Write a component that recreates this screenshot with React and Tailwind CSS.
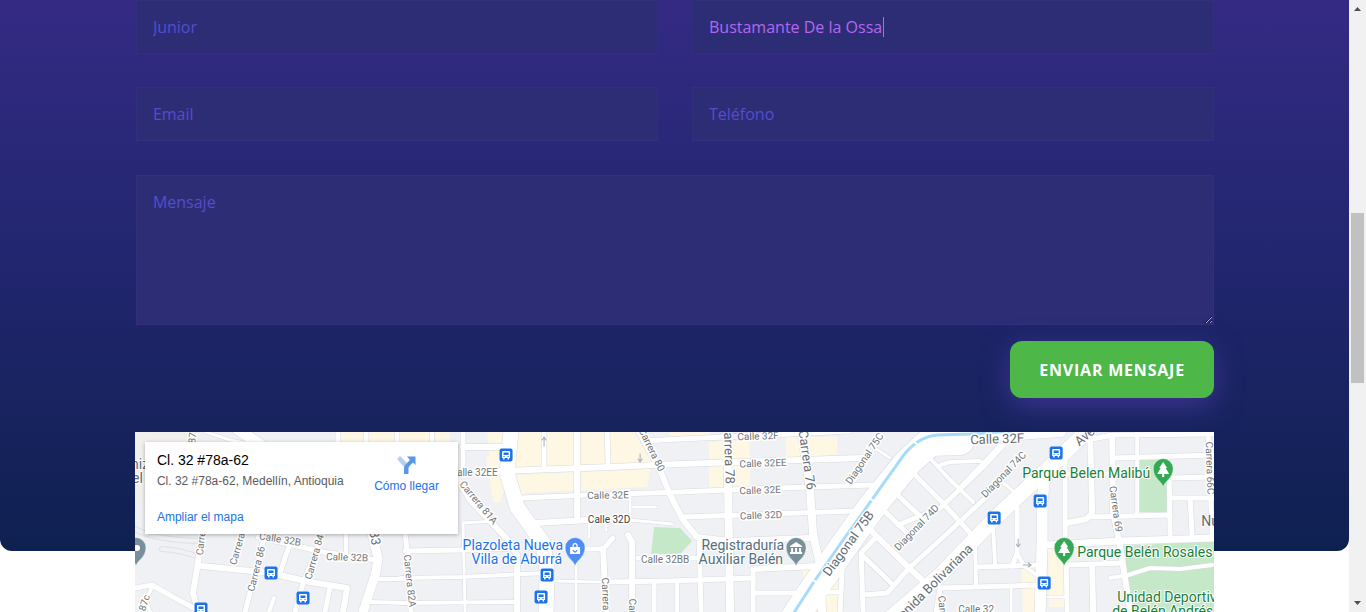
import React from "react";

const parks = [
  "654,527 680,528 692,541 680,554 651,554",
  "1139,459 1167,459 1167,512 1139,512",
  "1122,546 1214,541 1214,612 1134,612 1127,573",
  "455,478 459,477 462,483 457,485",
];

const commercial = [
  "341,432 450,432 450,444 341,444",
  "487,432 642,432 657,466 512,470 490,460",
  "486,456 502,456 507,478 500,503 493,502",
  "515,475 650,469 647,487 525,493 519,500",
  "670,432 710,432 710,436 670,437",
  "709,442 749,440 750,487 709,488",
  "786,437 837,437 837,455 786,458",
  "802,570 840,566 837,612 810,612",
  "1021,569 1037,566 1037,612 1023,612",
  "1048,547 1064,546 1065,607 1049,607",
  "1006,442 1014,441 1006,448",
];

const roads = [
  // west side
  [3, "206,432 230,440 250,444"],
  [11, "236,428 262,446"],
  [5, "338,432 338,446"],
  [5, "366,432 366,446"],
  [5, "397,432 397,446"],
  [4, "432,432 432,446"],
  [6, "202,533 198,563 193,593 198,612"],
  [6, "202,566 270,573 310,582 347,588 343,612"],
  [5, "135,588 152,585 173,597 203,613"],
  [4, "243,534 233,567"],
  [5, "265,534 245,612"],
  [5, "290,543 280,573"],
  [5, "323,534 303,583 295,612"],
  [5, "258,537 323,552 375,560"],
  [4, "346,534 346,556"],
  [9, "371,530 378,558 376,572 363,612"],
  [4, "376,579 410,579"],
  [4, "370,602 410,603"],
  [4, "274,598 269,612"],
  [5, "330,587 325,612"],
  [4, "152,587 146,600 150,612"],
  // centre west
  [15, "511,430 507,473 517,507 543,543 547,570 546,612"],
  [6, "463,447 505,447"],
  [5, "463,432 463,474"],
  [6, "457,472 500,471 610,467 680,464 770,461 862,458"],
  [5, "544,432 544,468"],
  [6, "577,432 577,520"],
  [5, "607,432 608,465"],
  [6, "638,430 660,470 670,495 683,520 697,537 730,541 810,538"],
  [5, "643,441 680,439 790,434 850,431"],
  [5, "522,498 588,495 680,492 750,489 872,485"],
  [6, "535,523 588,520 606,519"],
  [3, "630,497 630,520 672,524"],
  [3, "633,507 656,507"],
  [3, "589,522 589,537"],
  [3, "606,520 606,530"],
  [6, "455,475 470,500 508,540 517,555 517,612"],
  [3, "463,523 495,521"],
  [3, "463,523 465,612"],
  [5, "405,551 460,550 517,548"],
  [4, "400,578 460,577 547,573"],
  [4, "400,603 517,602"],
  [5, "405,533 407,551 411,612"],
  [5, "580,549 603,549 613,538"],
  [6, "603,549 606,612"],
  [6, "628,535 632,542 632,612"],
  [3, "553,581 600,582"],
  [5, "606,582 670,581 753,578"],
  [3, "576,563 576,612"],
  [5, "654,583 654,612"],
  [5, "638,558 700,558"],
  // centre
  [8, "727,430 730,612"],
  [8, "801,430 810,490 813,535 820,565 822,612"],
  [5, "682,517 855,511"],
  [6, "753,569 817,566"],
  [5, "753,593 800,593"],
  [5, "699,540 701,612"],
  [4, "677,582 677,612"],
  [5, "753,569 753,612"],
  [3, "876,449 890,458"],
  [28, "960,441 930,442 908,462 873,505 843,547 813,590 795,617"],
  [12, "935,435 1018,434 1060,431"],
  [5, "842,570 840,612"],
  [5, "820,592 840,592"],
  // diagonals
  [4, "922,450 950,480 973,502"],
  [5, "905,465 940,500 970,533"],
  [5, "890,488 924,520"],
  [5, "878,505 907,533"],
  [6, "867,527 909,568 922,580"],
  [5, "863,612 861,553 876,537"],
  [5, "863,556 893,585"],
  [5, "863,595 887,593 909,568 940,540 983,500"],
  [5, "898,525 940,508 983,467 1007,441"],
  [4, "940,465 950,462 980,461"],
  [5, "960,488 1000,446"],
  [3, "1000,480 1014,492"],
  [15, "890,618 940,575 995,518 1057,460 1090,428"],
  [5, "940,588 1040,585"],
  [5, "936,612 940,588"],
  // east
  [11, "1045,475 1042,500 1042,540 1040,612"],
  [5, "1065,455 1065,540"],
  [5, "1066,563 1067,612"],
  [6, "1090,436 1092,513 1086,519 1067,523"],
  [5, "1090,517 1170,515"],
  [5, "1088,440 1112,435 1214,434"],
  [6, "1112,436 1113,513 1120,547 1130,612"],
  [5, "1113,458 1214,455"],
  [4, "1137,432 1137,515"],
  [5, "1169,478 1214,477"],
  [5, "1169,480 1170,537"],
  [5, "1170,498 1214,498"],
  [5, "1190,500 1192,537"],
  [7, "1047,545 1120,541 1214,538"],
  [5, "1208,436 1212,537"],
  [5, "1066,474 1113,474"],
  [5, "977,567 1037,565"],
  [5, "1068,565 1122,563"],
  [6, "1092,567 1093,612"],
  [5, "1017,508 1017,553 1012,566"],
  [4, "1017,553 1024,566 1038,576"],
  [4, "993,528 995,566"],
  [4, "975,547 976,587"],
  [3, "1011,587 1011,612"],
  [3, "1048,597 1064,597"],
  [4, "1110,578 1128,575 1150,568 1180,569 1212,565"],
];

const streets = [
  [280, 540, 9, "Calle 32B"],
  [347, 558, 2, "Calle 32B"],
  [758, 437, -2, "Calle 32F"],
  [763, 464, -2, "Calle 32EE"],
  [760, 491, -2, "Calle 32E"],
  [761, 516, -2, "Calle 32D"],
  [474, 473, 0, "Calle 32EE"],
  [608, 496, -1, "Calle 32E"],
  [665, 560, 0, "Calle 32BB"],
  [976, 610, 0, "Calle 32"],
  [202, 539, -84, "Carrera"],
  [238, 549, -74, "Carrera"],
  [257, 569, -76, "Carrera 86"],
  [315, 557, -74, "Carrera 84"],
  [145, 603, -72, "87c"],
  [193, 438, -85, "87"],
  [478, 503, 50, "Carrera 81A"],
  [409, 581, 84, "Carrera 82A"],
  [651, 450, 64, "Carrera 80"],
  [605, 594, 88, "Carrera"],
  [632, 615, 88, "Carrera"],
  [865, 459, -56, "Diagonal 75C"],
  [917, 528, -46, "Diagonal 74D"],
  [1004, 475, -46, "Diagonal 74C"],
  [1115, 509, 82, "Carrera 69"],
  [1209, 468, 88, "Carrera 66C"],
  [942, 612, 86, "Carrera"],
];

const mainStreets = [
  [374, 538, 82, "83"],
  [728, 454, 88, "Carrera 78"],
  [806, 460, 82, "Carrera 76"],
  [849, 544, -54, "Diagonal 75B"],
  [931, 587, -45, "Avenida Bolivariana"],
  [1085, 437, -40, "Ave"],
  [997, 440, -2, "Calle 32F"],
];

const busStops = [
  [506, 455], [271, 573], [303, 598], [201, 609], [547, 575], [541, 597],
  [1056, 453], [1040, 501], [994, 518], [1044, 583],
];

const places = [
  ["#1a73e8", 563, 550, "end", "Plazoleta Nueva"],
  ["#1a73e8", 562, 564, "end", "Villa de Aburrá"],
  ["#546e7a", 784, 550, "end", "Registraduría"],
  ["#546e7a", 783, 564, "end", "Auxiliar Belén"],
  ["#188038", 1150, 478, "end", "Parque Belen Malibú"],
  ["#188038", 1077, 557, "start", "Parque Belén Rosales"],
  ["#188038", 1117, 602, "start", "Unidad Deportiva"],
  ["#188038", 1112, 616, "start", "de Belén Andrés"],
  ["#546e7a", 1201, 526, "start", "Nueva"],
  ["#546e7a", 131, 469, "start", "niz"],
  ["#546e7a", 132, 483, "start", "el P"],
];

function Pin({ x, y, color, children }) {
  return (
    <g transform={`translate(${x} ${y})`}>
      <path
        d="M0 15C-1.500 9-10 7-10-3.500A10 10 0 0 1 10-3.500C10 7 1.500 9 0 15Z"
        fill={color}
        stroke="#fff"
        strokeOpacity=".5"
        strokeWidth="1"
      />
      <g fill="#fff">{children}</g>
    </g>
  );
}

function Tree() {
  return <path d="M0-10 4-4H2.500L6 2H1V5H-1V2H-6L-2.500-4H-4Z" />;
}

function StreetMap() {
  return (
    <svg
      className="block h-[180px] w-full bg-[#f0f1f4] font-[Roboto,sans-serif]"
      viewBox="135 432 1079 180"
      preserveAspectRatio="xMidYMid slice"
      role="img"
      aria-label="Mapa de Medellín"
    >
      <rect x="135" y="432" width="67" height="70" fill="#f1f0ed" />
      {commercial.map((p) => <polygon key={p} points={p} fill="#fef7e4" />)}
      {parks.map((p) => <polygon key={p} points={p} fill="#c5e8c8" />)}
      <g fill="none" strokeLinecap="round" strokeLinejoin="round">
        <g stroke="#dfe1e4" strokeWidth="6">
          <path d="M135 529Q155 540 200 541M162 549Q180 550 199 557" />
        </g>
        <g stroke="#f0f1f4" strokeWidth="4">
          <path d="M135 529Q155 540 200 541M162 549Q180 550 199 557" />
        </g>
        {roads.map(([w, p]) => <polyline key={p} points={p} stroke="#d8dadf" strokeWidth={w + 1} />)}
        {roads.map(([w, p]) => <polyline key={p} points={p} stroke="#fff" strokeWidth={w} />)}
        <path
          d="M793 614 813 583 843 540 871 501 903 456Q917 437 937 435L970 434 1012 431"
          stroke="#a8dafc"
          strokeWidth="3"
          strokeLinecap="butt"
        />
        <path d="M868 497 876 503M811 579 818 583M913 441 920 447" stroke="#fff" strokeWidth="2" />
        <path
          d="M544 446V437M542 440 544 437 546 440M640 454V462M638 459 640 462 642 459M1018 539V547M1016 544 1018 547 1020 544M1023 565H1031M1028 563 1031 565 1028 567"
          stroke="#a6abb5"
          strokeWidth="1"
        />
      </g>
      <g textAnchor="middle" dominantBaseline="middle" fill="#70757a" stroke="#fff" strokeWidth="3" strokeLinejoin="round" paintOrder="stroke" fontSize="10">
        {streets.map(([x, y, a, t]) => (
          <text key={`${x}-${y}`} transform={`translate(${x} ${y}) rotate(${a})`}>{t}</text>
        ))}
        <text x="609" y="520" fill="#3c4043">Calle 32D</text>
        {mainStreets.map(([x, y, a, t]) => (
          <text key={`${x}-${y}`} fontSize="13" transform={`translate(${x} ${y}) rotate(${a})`} fill="#686d72">{t}</text>
        ))}
      </g>
      {busStops.map(([x, y]) => (
        <g key={`${x}-${y}`} transform={`translate(${x} ${y})`}>
          <rect x="-6.500" y="-6.500" width="13" height="13" rx="2" fill="#1a73e8" />
          <path d="M-4-3Q-4-4-3-4H3Q4-4 4-3V3H3V4.500H1.500V3H-1.500V4.500H-3V3H-4Z" fill="#fff" />
          <path d="M-2.500-2.500H2.500V0H-2.500ZM-2.500 1H-1.500V2H-2.500ZM1.500 1H2.500V2H1.500Z" fill="#1a73e8" />
        </g>
      ))}
      <Pin x={136} y={551} color="#78909c"><circle cx="1" cy="-3" r="3" /></Pin>
      <Pin x={575} y={551} color="#4f8df5">
        <path d="M-5-4H5V3H-5Z" />
        <path d="M-2-4V-6Q0-9 2-6V-4" fill="none" stroke="#fff" strokeWidth="1.300" />
        <path d="M-2-1Q0 3 2-1" fill="none" stroke="#4f8df5" strokeWidth="1.300" />
      </Pin>
      <Pin x={796} y={551} color="#78909c">
        <path d="M-6-5 0-9 6-5V-4H-6ZM-5-3H-3V1H-5ZM-1-3H1V1H-1ZM3-3H5V1H3ZM-6 1H6V3H-6Z" />
      </Pin>
      <Pin x={1163} y={472} color="#34a853"><Tree /></Pin>
      <Pin x={1064} y={551} color="#34a853"><Tree /></Pin>
      <g fontSize="14" stroke="#fff" strokeWidth="2" strokeLinejoin="round" paintOrder="stroke">
        {places.map(([c, x, y, anchor, t]) => (
          <text key={t} x={x} y={y} fill={c} textAnchor={anchor}>{t}</text>
        ))}
      </g>
    </svg>
  );
}

function MapCard() {
  return (
    <div className="absolute top-[10px] left-[10px] flex h-[92px] w-[313px] justify-between bg-white py-2.5 pr-[19px] pl-3 font-['Liberation_Sans',sans-serif] text-xs shadow-[0_1px_4px_rgba(0,0,0,0.3)]">
      <div className="flex flex-col">
        <h2 className="text-sm leading-4 text-black">Cl. 32 #78a-62</h2>
        <p className="mt-[5px] leading-4 text-[#5b5b5b]">Cl. 32 #78a-62, Medellín, Antioquia</p>
        <a href="#mapa" className="mt-5 leading-4 text-[#1a73e8]">Ampliar el mapa</a>
      </div>
      <a href="#ruta" className="flex flex-col items-center text-[#1a73e8]">
        <svg className="mt-0.5 h-[22px] w-[22px]" viewBox="0 0 22 22" aria-hidden="true">
          <path d="M1 5 4 2 11 9 8 13Z" fill="#b4d1f5" />
          <path d="M8 20V14Q8 12 9.500 10.500L14 6 11 2.500H19.500V11L17 8.500 13.500 12Q12.500 13 12.500 14.500V20Z" fill="#5797e6" />
        </svg>
        <span className="mt-0.5 leading-4">Cómo llegar</span>
      </a>
    </div>
  );
}

const fieldStyle =
  "block w-full border border-[#322f7c] bg-[#2d2d76] px-4 text-base text-[#b566f0] outline-none placeholder:text-[#544ecc]";

function Field({ label, type = "text", value, caret }) {
  return (
    <div className="relative">
      <input
        aria-label={label}
        type={type}
        defaultValue={value}
        placeholder={label}
        className={`${fieldStyle} h-[54px]`}
      />
      {caret && <span className="absolute top-[17px] left-[191px] h-5 w-px bg-[#b566f0]" />}
    </div>
  );
}

function Scrollbar() {
  return (
    <div className="flex w-[17px] shrink-0 flex-col items-center bg-[#f1f1f1]" aria-hidden="true">
      <svg className="h-[17px] w-[17px]" viewBox="0 0 17 17"><path d="M5 11H12L8.500 7Z" fill="#505050" /></svg>
      <div className="mt-[196px] h-[170px] w-[13px] bg-[#c1c1c1]" />
      <svg className="mt-auto h-[17px] w-[17px]" viewBox="0 0 17 17"><path d="M5 6H12L8.500 10Z" fill="#505050" /></svg>
    </div>
  );
}

export default function App() {
  return (
    <div className="flex min-h-screen bg-white font-['Open_Sans',sans-serif]">
      <main className="min-w-0 flex-1">
        <section className="rounded-b-xl bg-linear-to-b from-[#342a84] via-[#222670] via-45% to-[#0e2050]">
          <div className="mx-auto flex w-4/5 flex-col">
            <form className="flex flex-col pl-px" onSubmit={(e) => e.preventDefault()}>
              <div className="grid grid-cols-2 gap-x-[34px] gap-y-[33px]">
                <Field label="Junior" />
                <Field label="Apellidos" value="Bustamante De la Ossa" caret />
                <Field label="Email" type="email" />
                <Field label="Teléfono" type="tel" />
              </div>
              <textarea
                aria-label="Mensaje"
                placeholder="Mensaje"
                className={`${fieldStyle} mt-[34px] h-[150px] resize-y py-[14px]`}
              />
              <button
                type="submit"
                className="mt-4 flex h-[57px] w-[204px] items-center justify-center self-end rounded-xl bg-[#4db748] text-base font-bold tracking-wider text-white shadow-[0_8px_28px_#3d3591]"
              >
                ENVIAR MENSAJE
              </button>
            </form>
            <div className="relative mt-[34px] -mb-[61px]">
              <StreetMap />
              <MapCard />
            </div>
          </div>
        </section>
      </main>
      <Scrollbar />
    </div>
  );
}
